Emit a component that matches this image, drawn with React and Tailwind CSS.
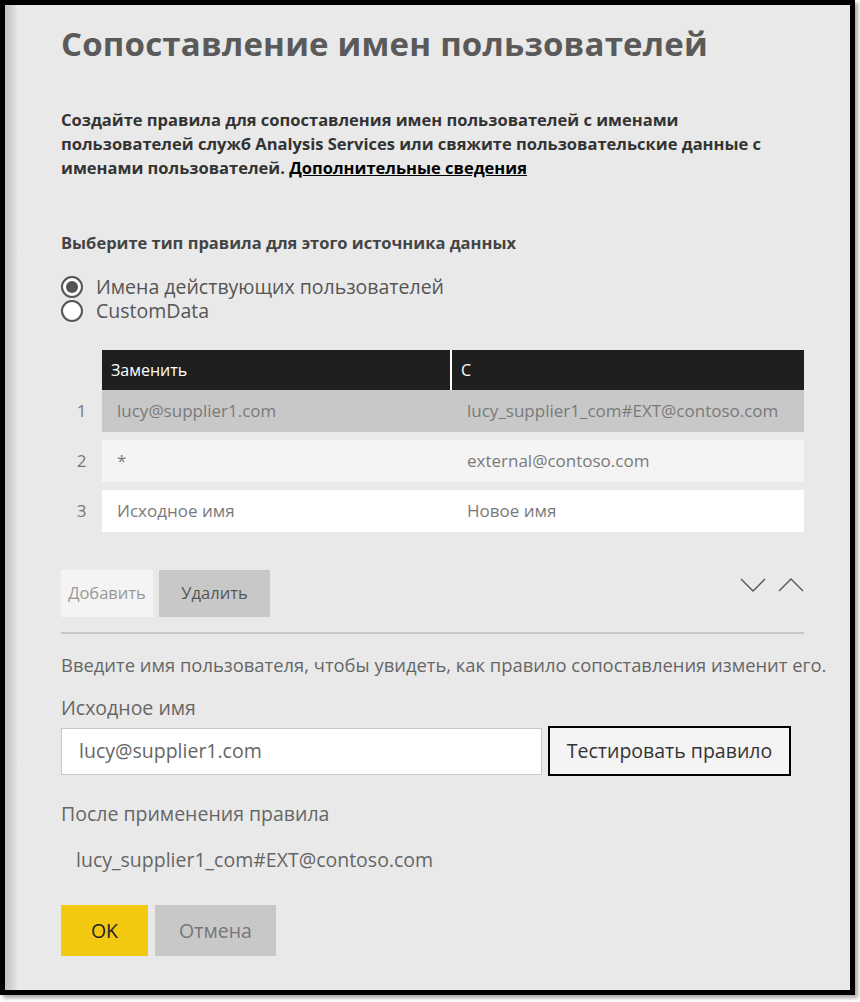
import React from "react";

const ROWS = [
  { n: 1, from: "lucy@supplier1.com", to: "lucy_supplier1_com#EXT@contoso.com", bg: "bg-[#c8c8c8]" },
  { n: 2, from: "*", to: "external@contoso.com", bg: "bg-[#f4f4f4]" },
  { n: 3, from: "Исходное имя", to: "Новое имя", bg: "bg-white" },
];

function Chevron({ up }) {
  return (
    <svg width="26" height="14" viewBox="0 0 26 14" fill="none">
      <path
        d={up ? "M1 13 L13 1 L25 13" : "M1 1 L13 13 L25 1"}
        stroke="#555"
        strokeWidth="1.4"
      />
    </svg>
  );
}

function Radio({ checked, label }) {
  return (
    <label className="flex items-center gap-[13px] h-6">
      <span className="w-[22px] h-[22px] rounded-full border-2 border-[#555] bg-white flex items-center justify-center">
        {checked && <span className="w-[12px] h-[12px] rounded-full bg-[#555]" />}
      </span>
      <span className="text-[19.5px] text-[#555] leading-6">{label}</span>
    </label>
  );
}

export default function App() {
  return (
    <div className="w-[860px] h-[1002px] bg-white font-['Open_Sans',sans-serif]">
      <div className="w-[855px] h-[995px] border-[5px] border-black bg-[#e9e9e9] shadow-[3px_3px_4px_rgba(0,0,0,0.35)] flex">
        <div className="w-[12px] shrink-0 bg-linear-to-r from-[#c0c0c0] to-[#e4e4e4]" />
        <div className="flex-1 min-w-0 pl-[44px] pr-[46px] flex flex-col">
          <h1 className="mt-[17px] text-[33px] leading-[44px] font-bold text-[#5a5a5a] tracking-[0.2px] whitespace-nowrap">
            Сопоставление имен пользователей
          </h1>

          <p className="mt-[42px] text-[16.5px] leading-6 font-bold text-[#333] w-[740px]">
            Создайте правила для сопоставления имен пользователей с именами пользователей служб Analysis Services или свяжите пользовательские данные с именами пользователей.{" "}
            <span className="text-black underline">Дополнительные сведения</span>
          </p>

          <div className="mt-[51px] text-[16.5px] leading-6 font-bold text-[#444]">
            Выберите тип правила для этого источника данных
          </div>

          <div className="mt-[20px] flex flex-col">
            <Radio checked label="Имена действующих пользователей" />
            <Radio label="CustomData" />
          </div>

          <div className="mt-[27px] w-[743px] flex flex-col">
            <div className="flex">
              <div className="w-[41px]" />
              <div className="flex-1 flex h-[40px] bg-[#1f1f1f] text-white text-[16px]">
                <div className="w-[350px] border-r-2 border-white flex items-center pl-[9px]">Заменить</div>
                <div className="flex-1 flex items-center pl-[9px]">С</div>
              </div>
            </div>
            <div className="flex flex-col gap-[8px]">
              {ROWS.map((r) => (
                <div key={r.n} className="flex">
                  <div className="w-[41px] flex items-center justify-center text-[17px] text-[#777]">{r.n}</div>
                  <div className={`flex-1 flex h-[42px] ${r.bg} text-[17px] text-[#7a7a7a]`}>
                    <div className="w-[350px] flex items-center pl-[15px]">{r.from}</div>
                    <div className="flex-1 flex items-center pl-[15px]">{r.to}</div>
                  </div>
                </div>
              ))}
            </div>
          </div>

          <div className="mt-[38px] w-[743px] flex items-start">
            <button className="w-[92px] h-[47px] bg-[#f4f4f4] text-[16.5px] text-[#999]">Добавить</button>
            <button className="ml-[6px] w-[111px] h-[47px] bg-[#c8c8c8] text-[16.5px] text-[#555]">Удалить</button>
            <div className="ml-auto mt-[8px] flex gap-[12px]">
              <Chevron />
              <Chevron up />
            </div>
          </div>

          <div className="mt-[15px] w-[743px] h-[2px] bg-[#c8c8c8]" />

          <div className="mt-[19px] text-[18.4px] leading-6 text-[#666] whitespace-nowrap">
            Введите имя пользователя, чтобы увидеть, как правило сопоставления изменит его.
          </div>

          <div className="mt-[19px] text-[19.5px] leading-6 text-[#666]">Исходное имя</div>

          <div className="mt-[6px] flex items-center">
            <div className="w-[481px] h-[47px] bg-white border border-[#c8c8c8] flex items-center pl-[17px] text-[19.5px] text-[#666]">
              lucy@supplier1.com
            </div>
            <button className="ml-[6px] w-[243px] h-[50px] bg-[#f4f4f4] border-2 border-black text-[19.5px] text-[#333]">
              Тестировать правило
            </button>
          </div>

          <div className="mt-[26px] text-[19.5px] leading-6 text-[#666]">После применения правила</div>

          <div className="mt-[22px] pl-[15px] text-[19.5px] leading-6 text-[#666]">
            lucy_supplier1_com#EXT@contoso.com
          </div>

          <div className="mt-[33px] flex">
            <button className="w-[87px] h-[51px] bg-[#f2c811] text-[19.5px] text-[#222]">OK</button>
            <button className="ml-[7px] w-[121px] h-[51px] bg-[#c8c8c8] text-[19.5px] text-[#777]">Отмена</button>
          </div>
        </div>
      </div>
    </div>
  );
}
